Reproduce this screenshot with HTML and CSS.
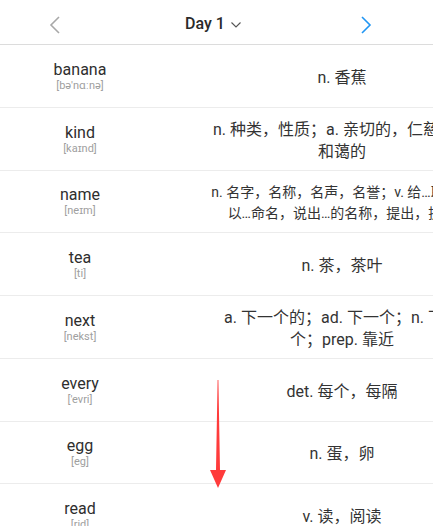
FILE: index.html
```html
<!DOCTYPE html>
<html lang="zh">
<head>
<meta charset="utf-8">
<link rel="stylesheet" href="styles.css">
</head>
<body>
<div class="page">
  <header class="topbar">
    <span class="nav nav-prev">
      <svg width="12" height="18" viewBox="0 0 12 18"><path d="M10 1 L2 9 L10 17" fill="none" stroke="#a8a8a8" stroke-width="1.6"/></svg>
    </span>
    <span class="title">Day 1
      <svg class="caret" width="10" height="6" viewBox="0 0 10 6"><path d="M0.5 0.5 L5 5 L9.5 0.5" fill="none" stroke="#555" stroke-width="1.1"/></svg>
    </span>
    <span class="nav nav-next">
      <svg width="12" height="18" viewBox="0 0 12 18"><path d="M2 1 L10 9 L2 17" fill="none" stroke="#2196f3" stroke-width="1.6"/></svg>
    </span>
  </header>
  <ul class="list">
    <li class="row"><div class="word"><span class="w">banana</span><span class="ph">[bə'nɑːnə]</span></div><div class="def">n. 香蕉</div></li>
    <li class="row"><div class="word"><span class="w">kind</span><span class="ph">[kaɪnd]</span></div><div class="def">n. 种类，性质；a. 亲切的，仁慈的，和蔼的</div></li>
    <li class="row"><div class="word"><span class="w">name</span><span class="ph">[neɪm]</span></div><div class="def small">n. 名字，名称，名声，名誉；v. 给…取名，以…命名，说出…的名称，提出，提名</div></li>
    <li class="row"><div class="word"><span class="w">tea</span><span class="ph">[ti]</span></div><div class="def">n. 茶，茶叶</div></li>
    <li class="row"><div class="word"><span class="w">next</span><span class="ph">[nekst]</span></div><div class="def">a. 下一个的；ad. 下一个；n. 下一个；prep. 靠近</div></li>
    <li class="row"><div class="word"><span class="w">every</span><span class="ph">['evri]</span></div><div class="def">det. 每个，每隔</div></li>
    <li class="row"><div class="word"><span class="w">egg</span><span class="ph">[eg]</span></div><div class="def">n. 蛋，卵</div></li>
    <li class="row"><div class="word"><span class="w">read</span><span class="ph">[rid]</span></div><div class="def">v. 读，阅读</div></li>
  </ul>
  <svg class="annot" width="20" height="110" viewBox="0 0 20 110">
    <polygon points="9.6,0 10.4,0 12,90 18,90 10,108 2,90 8,90" fill="#ff3b3b"/>
  </svg>
</div>
</body>
</html>
```
FILE: styles.css
```css
html, body {
  margin: 0;
  padding: 0;
  background: #fff;
  overflow: hidden;
}
body {
  font-family: Roboto, "Noto Sans CJK SC", sans-serif;
  color: #333;
}
.page {
  position: relative;
  width: 433px;
  height: 526px;
  overflow: hidden;
}
.topbar {
  box-sizing: border-box;
  height: 45px;
  padding-top: 5px;
  border-bottom: 1px solid #dcdcdc;
  display: flex;
  align-items: center;
  position: relative;
}
.nav {
  display: flex;
  align-items: center;
  height: 18px;
}
.nav-prev { margin-left: 49px; }
.nav-next { margin-left: auto; margin-right: 61px; }
.title {
  position: absolute;
  left: 185px;
  top: 13px;
  font-size: 16px;
  font-weight: 500;
  color: #2a2a2a;
  display: flex;
  align-items: center;
  line-height: 22px;
}
.caret {
  margin-left: 6px;
  margin-top: 1px;
}
.list {
  list-style: none;
  margin: 0;
  padding: 0;
}
.row {
  box-sizing: border-box;
  height: 62.75px;
  padding-top: 4px;
  border-bottom: 1px solid #ececec;
  display: flex;
  align-items: center;
}
.word {
  width: 160px;
  flex: none;
  display: flex;
  flex-direction: column;
  align-items: center;
  margin-top: -3px;
}
.w {
  font-size: 16px;
  line-height: 19px;
  color: #2e2e2e;
}
.ph {
  font-size: 11px;
  line-height: 14px;
  color: #a0a0a0;
}
.def {
  flex: none;
  width: 262px;
  margin-left: 51px;
  text-align: center;
  font-size: 16px;
  line-height: 22px;
  color: #333;
}
.def.small {
  width: 266px;
  margin-left: 49px;
  font-size: 14px;
  line-height: 21px;
}
.annot {
  position: absolute;
  left: 208px;
  top: 380px;
}
```
